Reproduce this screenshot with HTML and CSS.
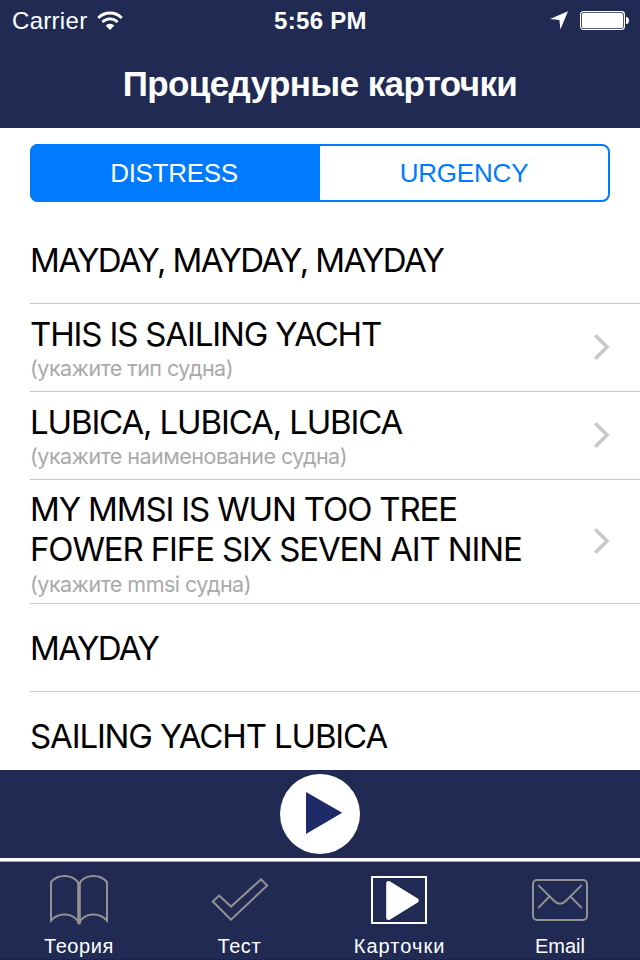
FILE: index.html
```html
<!DOCTYPE html>
<html lang="ru">
<head>
<meta charset="utf-8">
<title>Процедурные карточки</title>
<link rel="stylesheet" href="styles.css">
</head>
<body>
<div class="app">
  <header class="header">
    <div class="status">
      <div class="status-left">
        <span class="carrier">Carrier</span>
        <svg class="wifi" width="26" height="20" viewBox="0 0 26 20">
          <g fill="none" stroke="#fff">
            <path d="M1.3 7a16.2 16.2 0 0 1 23.4 0" stroke-width="3"/>
            <path d="M5.4 11.1a10.6 10.6 0 0 1 15.2 0" stroke-width="2.7"/>
          </g>
          <path d="M13 19l-4.3-4.4a6.2 6.2 0 0 1 8.6 0z" fill="#fff"/>
        </svg>
      </div>
      <span class="clock">5:56 PM</span>
      <div class="status-right">
        <svg width="18" height="19" viewBox="0 0 18 19"><path d="M18 0.2L10.4 18.4 9.4 9 0 8z" fill="#fff"/></svg>
        <svg width="50" height="20" viewBox="0 0 50 20">
          <rect x=".6" y=".6" width="43.8" height="17.8" rx="2.8" fill="none" stroke="#fff" stroke-width="1.2"/>
          <rect x="2" y="2" width="41" height="15" rx="1.5" fill="#fff"/>
          <path d="M46 6h1.2q1.8 1.2 1.8 3.5t-1.8 3.5H46z" fill="#fff"/>
        </svg>
      </div>
    </div>
    <h1 class="title">Процедурные карточки</h1>
  </header>

  <main class="content">
    <div class="segments">
      <div class="segment selected">DISTRESS</div>
      <div class="segment urgency">URGENCY</div>
    </div>
    <ul class="list">
      <li class="row"><div class="text"><div class="phrase mayday">MAYDAY, MAYDAY, MAYDAY</div></div></li>
      <li class="row">
        <div class="text"><div class="phrase">THIS IS SAILING YACHT</div><div class="hint">(укажите тип судна)</div></div>
        <svg class="chevron" width="17" height="28" viewBox="0 0 17 28"><path d="M2.2 2.2L14 14 2.2 25.8"/></svg>
      </li>
      <li class="row">
        <div class="text"><div class="phrase">LUBICA, LUBICA, LUBICA</div><div class="hint">(укажите наименование судна)</div></div>
        <svg class="chevron" width="17" height="28" viewBox="0 0 17 28"><path d="M2.2 2.2L14 14 2.2 25.8"/></svg>
      </li>
      <li class="row tall">
        <div class="text"><div class="phrase">MY MMSI IS WUN TOO TREE<br>FOWER FIFE SIX SEVEN AIT NINE</div><div class="hint">(укажите mmsi судна)</div></div>
        <svg class="chevron" width="17" height="28" viewBox="0 0 17 28"><path d="M2.2 2.2L14 14 2.2 25.8"/></svg>
      </li>
      <li class="row"><div class="text"><div class="phrase mayday">MAYDAY</div></div></li>
      <li class="row"><div class="text"><div class="phrase">SAILING YACHT LUBICA</div></div></li>
    </ul>
  </main>

  <div class="player">
    <svg width="80" height="80" viewBox="0 0 80 80"><circle cx="40" cy="40" r="40" fill="#fff"/><path d="M26 18v42l36.2-21.2z" fill="#1f2a68"/></svg>
  </div>

  <nav class="tabs">
    <div class="tab theory">
      <svg width="60" height="52" viewBox="0 0 60 52" fill="none" stroke="#929292" stroke-width="2">
        <path d="M30 10C24 -0.5 9 0 2 8v38.5c7-8 22-9 28 2.5 6-11.500 21-10.500 28-2.500V8C51 0 36-.5 30 10z"/>
        <path d="M30 9v41" stroke-width="3.6"/>
      </svg>
      <span>Теория</span>
    </div>
    <div class="tab test">
      <svg width="60" height="52" viewBox="0 0 60 52" fill="none" stroke="#929292" stroke-width="2"><path d="M3.8 27.5L10.2 21.500 22 32.600 52 5.400 58.200 11.500 22 45.700z"/></svg>
      <span>Тест</span>
    </div>
    <div class="tab cards">
      <svg width="60" height="52" viewBox="0 0 60 52"><path d="M2 3h54v46H2z" fill="none" stroke="#fff" stroke-width="2"/><path d="M18.500 9.300v34.400L46.500 26.500z" fill="#fff" stroke="#fff" stroke-width="4.600" stroke-linejoin="round"/></svg>
      <span>Карточки</span>
    </div>
    <div class="tab email">
      <svg width="60" height="52" viewBox="0 0 60 52" fill="none" stroke="#929292" stroke-width="2" stroke-linecap="round">
        <rect x="3" y="6" width="54" height="40" rx="4"/>
        <path d="M8.800 11.600L24.300 27q5.700 5.600 11.400 0L51.200 11.600M8.800 33.400L19 23M51.200 33.400L41 23"/>
      </svg>
      <span>Email</span>
    </div>
  </nav>
</div>
</body>
</html>
```
FILE: styles.css
```css
* { box-sizing: border-box; }
body { margin: 0; background: #fff; font-family: "Liberation Sans", Arial, sans-serif; }
svg { display: block; flex: none; }

.app { width: 640px; height: 960px; display: flex; flex-direction: column; overflow: hidden; }

.header { height: 128px; flex: none; background: #202a53; color: #fff; }
.status { height: 42px; display: grid; grid-template-columns: 1fr auto 1fr; align-items: center; padding: 0 11px 0 12px; font-size: 24px; line-height: 42px; }
.status-left { display: flex; align-items: center; gap: 10px; }
.carrier { letter-spacing: .3px; }
.wifi { margin-bottom: 1px; }
.clock { font-weight: bold; letter-spacing: .3px; }
.status-right { display: flex; align-items: center; justify-content: flex-end; gap: 12px; padding-bottom: 1px; margin-right: -1px; }
.title { margin: 0; height: 84px; line-height: 84px; font-size: 35px; font-weight: bold; letter-spacing: -.6px; text-align: center; }

.content { flex: 1; min-height: 0; overflow: hidden; padding-top: 16px; }
.segments { display: flex; height: 58px; margin: 0 30px; border: 2px solid #007aff; border-radius: 8px; font-size: 26px; line-height: 54px; text-align: center; letter-spacing: -.2px; }
.segment { flex: 1; color: #007aff; }
.selected { margin: -2px 0 -2px -2px; border-radius: 8px 0 0 8px; line-height: 58px; padding-right: 2px; background: #007aff; color: #fff; letter-spacing: -.3px; }

.list { list-style: none; margin: 14px 0 0; padding: 0 0 0 30px; font-family: Inter, "Liberation Sans", sans-serif; }
.row { height: 88px; display: flex; align-items: center; justify-content: space-between; border-bottom: 1px solid #c8c7cc; padding-right: 30px; }
.tall { height: 124px; }
.tall .text { padding-top: 1px; }
.text { white-space: nowrap; }
.phrase { font-size: 33px; line-height: 40px; letter-spacing: -1.14px; color: #000; }
.mayday { letter-spacing: -1.63px; }
.hint { height: 27px; font-size: 21.5px; line-height: 29px; letter-spacing: -.52px; color: #aaa; }
.tall .hint { line-height: 31px; }
.chevron { margin-bottom: 2px; }
.chevron path { fill: none; stroke: #c7c7cc; stroke-width: 3.4; }

.player { height: 88px; flex: none; display: flex; justify-content: center; padding-top: 4px; background: #202a53; }

.tabs { height: 102px; flex: none; display: flex; justify-content: space-between; border-top: 3px solid #fff; padding: 0 29px 0 28px; background: #202a53; box-shadow: inset 0 1px #a0a4ad, inset 0 -1px #1b2346; color: #fff; font-size: 20px; line-height: 24px; }
.tab { width: 102px; display: flex; flex-direction: column; align-items: center; padding-top: 13px; }
.tab span { margin-top: 8px; white-space: nowrap; }
.theory span { letter-spacing: .6px; }
.test span { letter-spacing: .6px; }
.cards span { letter-spacing: 1.05px; }
.email span { letter-spacing: 0; }
```
